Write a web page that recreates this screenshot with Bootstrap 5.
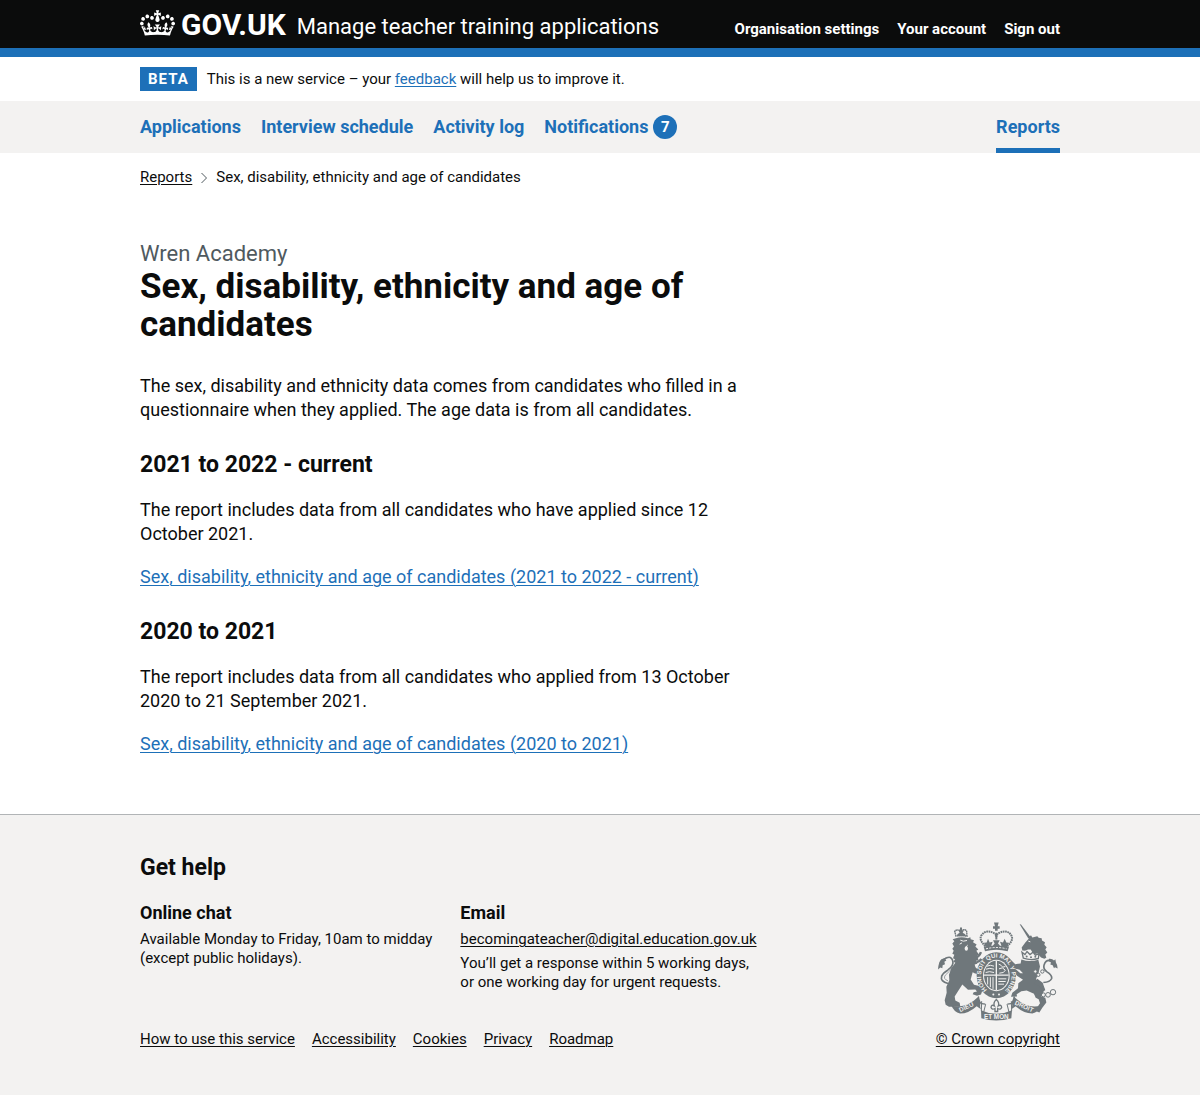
<!DOCTYPE html>
<html lang="en">
<head>
<meta charset="utf-8">
<meta name="viewport" content="width=device-width, initial-scale=1">
<title>Sex, disability, ethnicity and age of candidates - Manage teacher training applications</title>
<link href="https://cdn.jsdelivr.net/npm/bootstrap@5.3.0/dist/css/bootstrap.min.css" rel="stylesheet">
<style>
  :root { --ink: #0b0c0c; --brand: #1d70b8; --pale: #f3f2f1; --muted: #505a5f; }
  body { font-family: Roboto, "Liberation Sans", sans-serif; font-size: 18px; line-height: 24px; color: var(--ink); background: var(--pale); }
  .page-width { max-width: 920px; margin-left: auto; margin-right: auto; }
  p { margin-bottom: 19px; }
  a { color: var(--brand); text-underline-offset: 2px; text-decoration-thickness: 1px; }
  a:hover { color: #003078; }
  .text-s { font-size: 15px; line-height: 19px; }
  .top-bar { background: var(--ink); border-bottom: 9px solid var(--brand); min-height: 57px; }
  .top-bar a { color: #fff; text-decoration: none; }
  .crown { width: 35px; height: 26px; margin-right: 6px; }
  .wordmark { font-size: 30px; line-height: 30px; font-weight: 700; }
  .service { font-size: 22px; line-height: 30px; margin-left: 11px; }
  .brand-row { padding: 8px 0 6px; }
  .account { gap: 18px; font-weight: 700; padding-top: 10px; }
  .phase { padding: 10px 0; }
  .phase-tag { background: var(--brand); color: #fff; font-weight: 700; letter-spacing: 1px; padding: 0 8px; line-height: 24px; margin-right: 10px; }
  .main-nav { background: var(--pale); }
  .main-nav .page-width { column-gap: 20px; }
  .main-nav a { font-weight: 700; text-decoration: none; padding: 14px 0 9px; border-bottom: 5px solid transparent; display: flex; align-items: center; gap: 5px; }
  .main-nav a.active { border-color: var(--brand); }
  .count { background: var(--brand); color: #fff; font-size: 15px; width: 24px; border-radius: 12px; text-align: center; }
  .crumbs { margin-top: 15px; }
  .crumbs a { color: var(--ink); }
  .chevron { width: 8px; height: 12px; margin: 0 8px; }
  main { padding: 53px 0 58px; }
  .caption-l { font-size: 22px; line-height: 28px; color: var(--muted); display: block; font-weight: 400; }
  h1 { font-size: 35px; line-height: 38px; font-weight: 700; margin-bottom: 30px; }
  h2 { font-size: 23px; line-height: 29px; font-weight: 700; margin: 28px 0 19px; }
  h3 { font-size: 18px; line-height: 24px; font-weight: 700; margin-bottom: 5px; }
  .site-footer { border-top: 1px solid #b1b4b6; background: var(--pale); padding: 38px 0 45px; }
  .site-footer a { color: var(--ink); }
  .site-footer h2 { margin: 0 0 19px; }
  .help-columns { column-gap: 28px; row-gap: 19px; }
  .help-columns p { margin-bottom: 5px; }
  .crest { width: 120px; height: 99px; margin-bottom: 9px; }
  .foot-links { gap: 17px; margin-top: 33px; }
</style>
<script src="https://cdn.jsdelivr.net/npm/bootstrap@5.3.0/dist/js/bootstrap.bundle.min.js" defer></script>
</head>
<body>
<header class="top-bar px-3">
  <div class="page-width d-flex flex-wrap justify-content-between align-items-center">
    <div class="brand-row d-flex flex-wrap align-items-center">
      <a href="#" class="d-flex align-items-start" aria-label="GOV.UK">
        <svg class="crown" viewBox="0 0 132 97" fill="#fff" aria-hidden="true"><path d="M25 30.2c3.5 1.5 7.7-.2 9.1-3.7 1.5-3.6-.2-7.8-3.9-9.2-3.6-1.4-7.6.3-9.1 3.9-1.4 3.5.3 7.5 3.9 9zM9 39.5c3.6 1.5 7.8-.2 9.2-3.7 1.5-3.6-.2-7.8-3.9-9.1-3.6-1.5-7.6.2-9.1 3.8-1.4 3.5.3 7.5 3.8 9zM4.4 57.2c3.5 1.5 7.7-.2 9.1-3.8 1.5-3.6-.2-7.7-3.9-9.1-3.5-1.5-7.6.3-9.1 3.8-1.4 3.5.3 7.6 3.9 9.1zm38.3-21.4c3.5 1.5 7.7-.2 9.1-3.8 1.5-3.6-.2-7.7-3.9-9.1-3.6-1.5-7.6.3-9.1 3.8-1.3 3.6.4 7.7 3.9 9.1zm64.4-5.6c-3.6 1.5-7.8-.2-9.1-3.7-1.5-3.6.2-7.8 3.8-9.2 3.6-1.4 7.7.3 9.2 3.9 1.3 3.5-.4 7.5-3.9 9zm15.9 9.3c-3.6 1.5-7.7-.2-9.1-3.7-1.5-3.6.2-7.8 3.7-9.1 3.6-1.5 7.7.2 9.2 3.8 1.5 3.5-.3 7.5-3.8 9zm4.7 17.7c-3.6 1.5-7.8-.2-9.2-3.8-1.5-3.6.2-7.7 3.9-9.1 3.6-1.5 7.7.3 9.2 3.8 1.3 3.5-.4 7.6-3.9 9.1zM89.3 35.8c-3.6 1.5-7.8-.2-9.2-3.8-1.4-3.6.2-7.7 3.9-9.1 3.6-1.5 7.7.3 9.2 3.8 1.4 3.6-.3 7.7-3.9 9.1zM69.7 17.7l8.9 4.7V9.3l-8.9 2.8c-.2-.3-.5-.6-.9-.9L72.4 0H59.6l3.5 11.2c-.3.3-.6.5-.9.9l-8.8-2.8v13.1l8.8-4.7c.3.3.6.7.9.9l-5 15.4v.1c-.2.8-.4 1.6-.4 2.4 0 4.1 3.1 7.5 7 8.1h.2c.3 0 .7.1 1 .1.4 0 .7 0 1-.1h.2c4-.6 7.1-4.1 7.1-8.1 0-.8-.1-1.7-.4-2.4V34l-5.1-15.4c.4-.2.7-.6 1-.9zM66 92.8c16.9 0 32.8 1.1 47.1 3.2 4-16.9 8.9-26.7 14-33.5l-9.6-3.4c1 4.9 1.1 7.2 0 10.2-1.5-1.4-3-4.3-4.2-8.7L108.6 76c2.8-2 5-3.2 7.5-3.3-4.4 9.4-10 11.9-13.6 11.2-4.3-.8-6.3-4.6-5.6-7.9 1-4.7 5.7-5.9 8-.5 4.3-8.7-3-11.4-7.6-8.8 7.1-7.2 7.9-13.5 2.1-21.1-8 6.1-8.1 12.3-4.5 20.8-4.7-5.4-12.1-2.5-9.5 6.2 3.4-5.2 7.9-2 7.2 3.1-.6 4.3-6.4 7.8-13.5 7.2-10.3-.9-10.9-8-11.2-13.8 2.5-.5 7.1 1.8 11 7.3L80.2 60c-4.1 4.4-8 5.3-12.3 5.4 1.4-4.4 8-11.6 8-11.6H55.5s6.4 7.2 7.9 11.6c-4.2-.1-8-1-12.3-5.4l1.4 16.4c3.9-5.5 8.5-7.7 10.9-7.3-.3 5.8-.9 12.8-11.1 13.8-7.2.6-12.9-2.9-13.5-7.2-.7-5 3.8-8.3 7.1-3.1 2.7-8.7-4.6-11.6-9.4-6.2 3.7-8.5 3.6-14.7-4.6-20.8-5.8 7.6-5 13.9 2.2 21.1-4.7-2.6-11.9.1-7.7 8.8 2.3-5.5 7.1-4.2 8.1.5.7 3.3-1.3 7.1-5.7 7.9-3.5.7-9-1.8-13.5-11.2 2.5.1 4.7 1.3 7.5 3.3l-4.7-15.4c-1.2 4.4-2.7 7.2-4.3 8.7-1.1-3-.9-5.3 0-10.2l-9.5 3.4c5 6.9 9.9 16.7 14 33.5 14.8-2.1 30.8-3.2 47.7-3.2z"/></svg>
        <span class="wordmark">GOV.UK</span>
      </a>
      <a href="#" class="service pt-1">Manage teacher training applications</a>
    </div>
    <nav class="account text-s d-flex flex-wrap" aria-label="Account">
      <a href="#">Organisation settings</a>
      <a href="#">Your account</a>
      <a href="#">Sign out</a>
    </nav>
  </div>
</header>

<div class="bg-white px-3">
  <div class="page-width phase text-s d-flex align-items-center">
    <strong class="phase-tag">BETA</strong>
    <span>This is a new service – your <a href="#">feedback</a> will help us to improve it.</span>
  </div>
</div>

<nav class="main-nav px-3" aria-label="Primary">
  <div class="page-width d-flex flex-wrap">
    <a href="#">Applications</a>
    <a href="#">Interview schedule</a>
    <a href="#">Activity log</a>
    <a href="#">Notifications <span class="count">7</span></a>
    <a href="#" class="active ms-auto" aria-current="page">Reports</a>
  </div>
</nav>

<div class="bg-white px-3 overflow-hidden">
  <div class="page-width">
    <nav class="crumbs text-s" aria-label="Breadcrumb">
      <ol class="list-unstyled d-flex align-items-center mb-0">
        <li><a href="#">Reports</a></li>
        <li class="d-flex align-items-center"><svg class="chevron" viewBox="0 0 8 12" fill="none" stroke="#505a5f" aria-hidden="true"><path d="M1.500 1l5 5-5 5"/></svg>Sex, disability, ethnicity and age of candidates</li>
      </ol>
    </nav>
    <main>
      <div class="row">
        <div class="col-md-8">
          <h1><span class="caption-l">Wren Academy</span>Sex, disability, ethnicity and age of candidates</h1>
          <p>The sex, disability and ethnicity data comes from candidates who filled in a questionnaire when they applied. The age data is from all candidates.</p>
          <h2>2021 to 2022 - current</h2>
          <p>The report includes data from all candidates who have applied since 12 October 2021.</p>
          <p><a href="#">Sex, disability, ethnicity and age of candidates (2021 to 2022 - current)</a></p>
          <h2>2020 to 2021</h2>
          <p>The report includes data from all candidates who applied from 13 October 2020 to 21 September 2021.</p>
          <p class="mb-0"><a href="#">Sex, disability, ethnicity and age of candidates (2020 to 2021)</a></p>
        </div>
      </div>
    </main>
  </div>
</div>

<footer class="site-footer px-3">
  <div class="page-width text-s d-flex flex-wrap justify-content-between align-items-end">
    <div>
      <h2>Get help</h2>
      <div class="help-columns d-flex flex-wrap">
        <div>
          <h3>Online chat</h3>
          <p>Available Monday to Friday, 10am to midday<br>(except public holidays).</p>
        </div>
        <div>
          <h3>Email</h3>
          <p><a href="#">becomingateacher@digital.education.gov.uk</a></p>
          <p>You’ll get a response within 5 working days,<br>or one working day for urgent requests.</p>
        </div>
      </div>
      <div class="foot-links d-flex flex-wrap">
        <a href="#">How to use this service</a>
        <a href="#">Accessibility</a>
        <a href="#">Cookies</a>
        <a href="#">Privacy</a>
        <a href="#">Roadmap</a>
      </div>
    </div>
    <a href="#" class="d-flex flex-column align-items-center">
      <svg class="crest" viewBox="36 38 360 296" fill="#6f777b" aria-hidden="true">
        <!-- lion's crown -->
        <path d="M90 80l-4-15q7-6 14-2l4-3 4 2q9-4 14 3l1 15q-16-4-33 0z" fill="none" stroke="#6f777b" stroke-width="4" stroke-dasharray="5 1"/>
        <path d="M102 54h6v8h6l-4 8 8 4v6H94v-6l7-4-4-8h5z"/>
        <!-- lion -->
        <path d="M90 86q16-6 36 0l7-3 1 6 10 3-3 6 11 7-4 6 9 9-6 4 8 12-6 3 5 13-7 1 3 10-8 2q2 12 10 14l8-1 2 12q-14 6-26-2l-6 22 10 16 19 4 6 13-4 12-12 4-13-5 3-6 10-2-5-6-22 1-17-16-14 22-9 14 2 12 13 7 2 12H69l-10-6-3-14 6-22-1-18 9-20-1-16 7-20 12-16-6-3 5-8-6-3 4-10-6-3 4-9-4-6 5-7-5-9 6-7-5-6z"/>
        <path d="M103 92l9 3 11-2M101 104l7-4M125 107q-5 2-4 8" fill="none" stroke="#f3f2f1" stroke-width="3"/>
        <ellipse cx="121" cy="117" rx="5" ry="7" fill="#f3f2f1"/>
        <path d="M148 146q12-5 17-18M152 158q10-3 14-10" fill="none" stroke="#6f777b" stroke-width="7"/>
        <path d="M66 222q-24-6-19-22 4-10 18-18 20-13 15-29-5-14-18-8-12 5-20 17" fill="none" stroke="#6f777b" stroke-width="5"/>
        <path d="M66 214q-16-6-8-17 15-13 22-24" fill="none" stroke="#6f777b" stroke-width="2"/>
        <path d="M63 143l-5 6 3 4-6 4 2 7-7 3-1 9-6-2-7 6q1-22 10-31z"/>
        <!-- unicorn -->
        <path d="M281 44l4 1 29 38-7 4z"/>
        <path d="M308 88q0-8 7-11l4 7 15-4 4 5 9 1 1 7 9 5-2 8 7 7-4 7 6 9-6 6 3 10-6 3-10-4-10-12-12 2-9-14-8 0-9 4-8-1-2-9 11-15z"/>
        <path d="M307 95l6 2" stroke="#f3f2f1" stroke-width="3"/>
        <path d="M288 128l9 7 6-9 9 9 9-7 7 9 11-4-2 14q-23 7-45-1z" fill="#f3f2f1" stroke="#6f777b" stroke-width="4"/>
        <circle cx="302" cy="141" r="3"/><circle cx="315" cy="143" r="3"/><circle cx="328" cy="142" r="3"/>
        <path d="M286 150q25 9 51 1l5 20-4 18-8 20 17 12 9 19-8 15-3 5 13 5 3 14-12 16-9 14-15-6 9-10 8-12-4-12-9-4-5-12-22-10-16 2-14 9 1 7-18 1 4-12 17-14 1-15 14-10-18-12-10-12-12 3-4-8 10-9 14 8 12 10 8 0-10-10-15-4-6-9-12-1-3-10 9-6 14 13 16-2z"/>
        <path d="M334 208l16 12 8 22-7 3-16-18-12-4z"/>
        <path d="M352 219q20-1 25-12 2-10-14-20-12-8-9-20 5-16 18-14 10 2 17 15" fill="none" stroke="#6f777b" stroke-width="5"/>
        <path d="M369 148q10-1 15 5l4-4 2 11q5 7 5 17l-8-4-3 3-4-9-7-2 2-6-7-4z"/>
        <g fill="none" stroke="#6f777b" stroke-width="3"><circle cx="331" cy="250" r="6"/><circle cx="344" cy="238" r="5"/><circle cx="352" cy="256" r="6"/><circle cx="366" cy="256" r="7"/><circle cx="381" cy="248" r="8"/></g>
        <g fill="#f3f2f1" stroke="#6f777b" stroke-width="3"><circle cx="328" cy="186" r="5"/><circle cx="337" cy="196" r="5"/><circle cx="349" cy="186" r="5"/></g>
        <!-- royal crown -->
        <path d="M207 64v-6h-6v-8h6l-3-11h14l-3 11h6v8h-6v6z"/>
        <path d="M178 110q-20-19-12-32 14-20 38-7 6 3 7 11 1-8 7-11 26-13 38 7 8 13-12 32" fill="none" stroke="#6f777b" stroke-width="6" stroke-dasharray="5 2"/>
        <path d="M208 70h6v20h-6zM174 100l8-1 4-11 5 11 9-2-5 13h-17zM198 111l8-9-5-10h20l-5 10 8 9zM222 97l9 2 5-11 5 11 8 1-5 11-17-1zM173 112q37-10 76 0l-4 13q-34-9-68 0z"/>
        <path d="M180 118q31-8 62 0" fill="none" stroke="#f3f2f1" stroke-width="3" stroke-dasharray="6 4"/>
        <!-- garter and shield -->
        <ellipse cx="211" cy="197" rx="59" ry="69"/>
        <ellipse cx="211" cy="198" rx="40" ry="47" fill="#f3f2f1"/>
        <ellipse cx="211" cy="198" rx="37" ry="44"/>
        <path d="M211 154v88M174 197h74" stroke="#f3f2f1" stroke-width="4"/>
        <path d="M183 170q10-5 21 0M180 179q11-5 24 0M179 189q11-5 25 0M217 208h24M217 216h22M217 224h17M185 203v22M193 203v30M201 203v35M218 164q8 2 12 9l8-2M219 178l10-3 9 7-6 7-12 2" fill="none" stroke="#f3f2f1" stroke-width="3"/>
        <path id="garter" d="M183 241A46 54 0 1 1 239 241" fill="none"/>
        <text font-family="Liberation Sans, sans-serif" font-size="18" font-weight="700" fill="#f3f2f1"><textPath href="#garter">HONI SOIT QUI MAL Y PENSE</textPath></text>
        <circle cx="202" cy="255" r="3" fill="#f3f2f1"/><circle cx="219" cy="255" r="3" fill="#f3f2f1"/>
        <!-- motto scroll -->
        <path d="M76 288q42 12 82-27l6 17q-4 14 2 22l-14-10q-24 22-50 22-18-4-26-24z"/>
        <path d="M345 288q-42 12-81-27l-7 17q4 14-2 22l14-10q24 22 50 22 18-4 26-24z"/>
        <path d="M158 261q-6 22 20 23M264 261q6 22-20 23" fill="none" stroke="#6f777b" stroke-width="4"/>
        <path d="M165 302q46 22 93 0l-2 24q-46 14-90 0z"/>
        <path d="M167 275l-1 30M256 275l1 30M179 284l-6 24M243 284l6 24" fill="none" stroke="#6f777b" stroke-width="3"/>
        <path d="M207 306v-9q-9 5-12-3 1-10 10-5-4-10 6-19 10 9 6 19 9-5 10 5-3 8-12 3v9z" fill="#f3f2f1" stroke="#6f777b" stroke-width="4"/>
        <g font-family="Liberation Sans, sans-serif" font-weight="700" font-size="19" fill="#f3f2f1"><text x="103" y="308" transform="rotate(-25 103 308)">DIEU</text><text x="265" y="284" transform="rotate(25 265 284)">DROIT</text><text x="211" y="328" text-anchor="middle">ET MON</text></g>
      </svg>
      <span>© Crown copyright</span>
    </a>
  </div>
</footer>
</body>
</html>
